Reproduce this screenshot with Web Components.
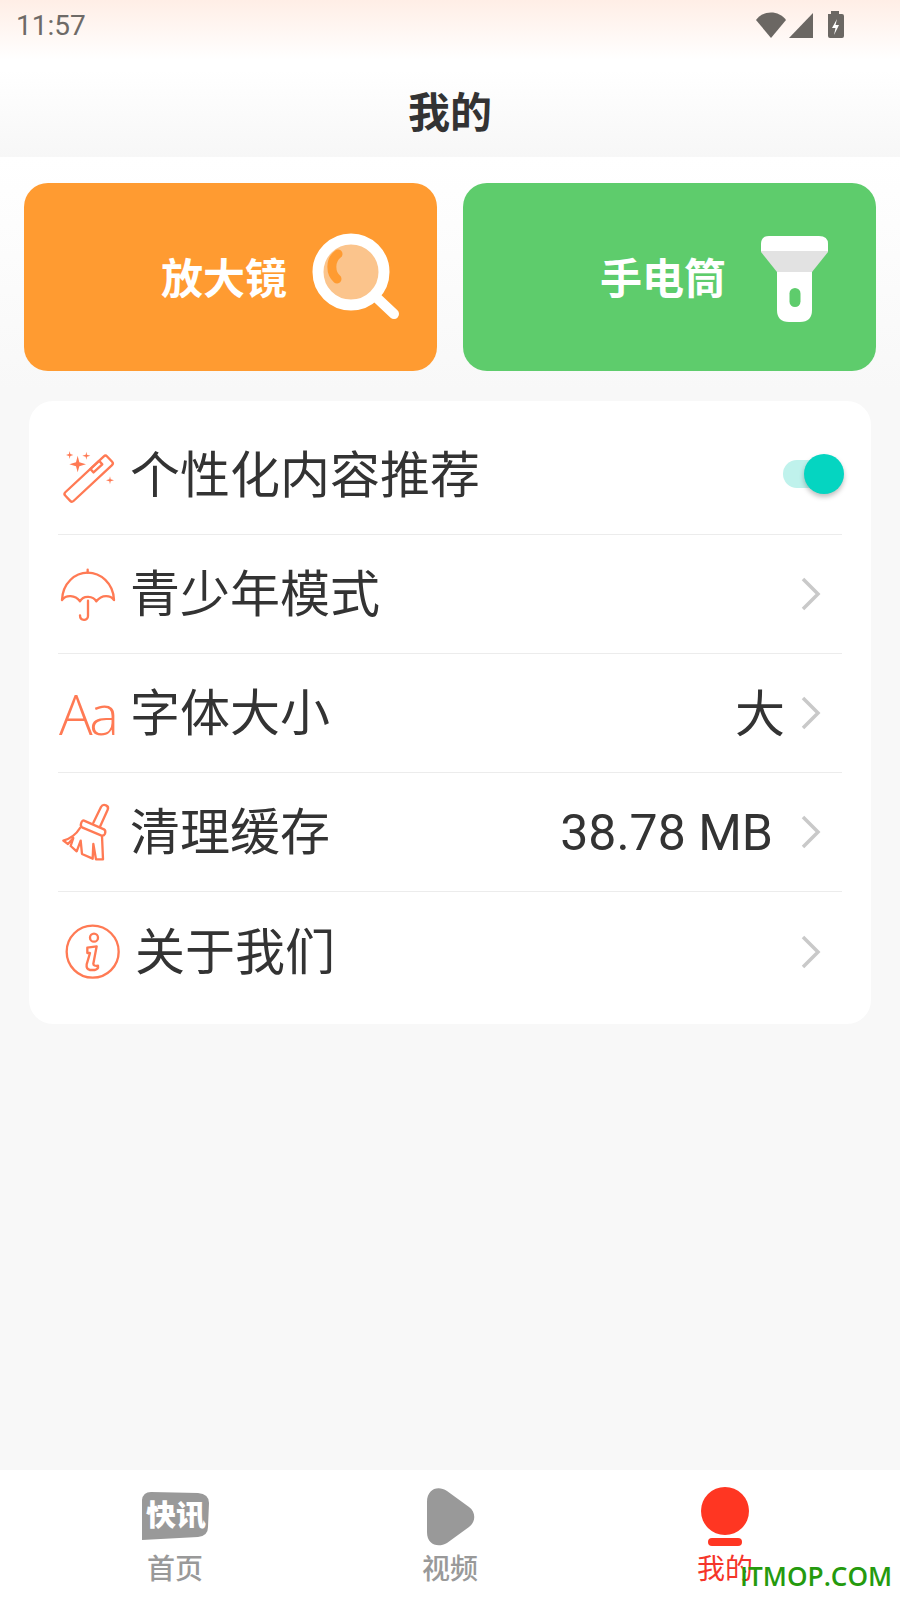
<!DOCTYPE html>
<html lang="zh">
<head>
<meta charset="utf-8">
<title>我的</title>
<style>
    html, body { margin: 0; padding: 0; }
    body {
        width: 900px;
        height: 1600px;
        overflow: hidden;
        position: relative;
        display: flex;
        flex-direction: column;
        background: #f8f8f8;
        font-family: "Noto Sans CJK SC", "Noto Sans", sans-serif;
        color: #333;
    }
    setting-row svg { display: block; overflow: visible; }
</style>
</head>
<body>
<app-header title-text="我的" time="11:57"></app-header>

<main-area>
    <tool-card label="放大镜" color="#ff9b31" style="--pad: 38px; --gap: 24px; --icon-shift: 1px">
        <svg slot="icon" width="88" height="90" viewBox="0 0 88 90">
            <circle cx="40" cy="39" r="33" fill="#fbc48c" stroke="#fff" stroke-width="11"/>
            <path d="M66 65 L83 81" stroke="#fff" stroke-width="10" stroke-linecap="round"/>
            <path d="M27 21 C19 27 19 40 26 46" fill="none" stroke="#ff9b31" stroke-width="9" stroke-linecap="round"/>
        </svg>
    </tool-card>
    <tool-card label="手电筒" color="#5ecc6c" style="--pad: 48px; --gap: 34px; --icon-shift: 1px">
        <svg slot="icon" width="68" height="87" viewBox="0 0 68 87">
            <path d="M1 15 L68 15 L68 17 L52 37 L17 37 L1 17 Z" fill="#e2e2e2"/>
            <path d="M1 9 Q1 1 9 1 L59 1 Q68 1 68 9 L68 16 L1 16 Z" fill="#fff"/>
            <path d="M17 37 L52 37 L52 75 Q52 87 40 87 L29 87 Q17 87 17 75 Z" fill="#fff"/>
            <rect x="29.500" y="53" width="11" height="19" rx="5.500" fill="#5ecc6c"/>
        </svg>
    </tool-card>

    <settings-list>
        <setting-row no-arrow>
            <svg slot="icon" width="60" height="60" viewBox="54 42 180 180" fill="none" stroke="#ff7a54" stroke-width="7" stroke-linejoin="round">
                <rect x="60" y="125" width="172" height="36" rx="7" transform="rotate(-43 146 143)"/>
                <rect x="151" y="100" width="36" height="14" transform="rotate(-43 169 107)"/>
                <g fill="#ff7a54" stroke="none">
                    <path d="M113 74 L118 94 L138 100 L118 106 L113 124 L108 106 L88 100 L108 94 Z"/>
                    <path d="M89 60 L91 69 L100 72 L91 75 L89 84 L87 75 L78 72 L87 69 Z"/>
                    <path d="M139 62 L141 71 L151 74 L141 77 L139 86 L137 77 L127 74 L137 71 Z"/>
                    <path d="M210 136 L212 145 L222 148 L212 151 L210 160 L208 151 L198 148 L208 145 Z"/>
                </g>
            </svg>
            个性化内容推荐
            <toggle-switch slot="value"></toggle-switch>
        </setting-row>
        <setting-row>
            <svg slot="icon" width="60" height="60" viewBox="54 398 180 180" fill="none" stroke="#ff7a54" stroke-width="7" stroke-linecap="round" stroke-linejoin="round">
                <path d="M143 415 L143 424"/>
                <path d="M66 506 C68 455 105 424 143 424 C181 424 220 455 222 506 C212 492 186 488 169 510 C160 494 130 490 120 510 C105 490 78 490 66 506 Z"/>
                <path d="M144 508 L144 554 C144 570 120 570 120 552"/>
            </svg>
            青少年模式
        </setting-row>
        <setting-row>
            <span slot="icon" style="display:block;width:60px;margin-left:1px;font:300 56px/60px 'Open Sans',sans-serif;color:#ff7a54;letter-spacing:-3.500px;white-space:nowrap">Aa</span>
            字体大小
            <row-value slot="value" style="--right: 16px; --top: 2px">大</row-value>
        </setting-row>
        <setting-row>
            <svg slot="icon" width="60" height="60" viewBox="54 396 180 180" fill="none" stroke="#ff7a54" stroke-width="7" stroke-linecap="round" stroke-linejoin="round">
                <path d="M160 458 L183 411 Q188 402 198 406 Q207 410 203 419 L180 470"/>
                <path d="M132 452 L192 478 Q198 482 195 491 Q191 499 183 496 L126 472 Q120 468 124 458 Q127 450 132 452 Z"/>
                <path d="M120 474 C108 494 90 506 70 512 L84 522 L100 504 L92 528 L110 544 L122 512 L126 552 L158 566 L160 522 L168 568 L189 568 L186 498"/>
            </svg>
            清理缓存
            <row-value slot="value" style="--right: 28px; --top: 1px">38.78 MB</row-value>
        </setting-row>
        <setting-row style="--icon-gap: 17px">
            <svg slot="icon" width="60" height="60" viewBox="54 753 180 180" fill="none" stroke="#ff7a54" stroke-width="7" stroke-linecap="round" stroke-linejoin="round">
                <circle cx="158" cy="842" r="78"/>
                <circle cx="162" cy="800" r="12"/>
                <path d="M142 830 L170 826 L160 878 Q160 886 174 884 Q176 894 164 897 L150 897 Q138 894 140 880 L150 846 L142 846 Z"/>
            </svg>
            关于我们
        </setting-row>
    </settings-list>
</main-area>

<tab-bar>
    <tab-item label="首页">
        <svg slot="icon" width="80" height="62" viewBox="0 0 80 62">
            <path d="M7 12 Q8 4 16 4 L63 5 Q74 6 74 15 L73 39 Q73 48 63 49 L7 52 Z" fill="#999"/>
            <text x="11" y="38" font-family="Noto Sans CJK SC, sans-serif" font-size="29" font-weight="900" fill="#fff" textLength="60" lengthAdjust="spacingAndGlyphs">快讯</text>
        </svg>
    </tab-item>
    <tab-item label="视频">
        <svg slot="icon" width="80" height="62" viewBox="0 0 80 62">
            <path d="M17 14 C17 1 28 -3 37 3 L59 19 C66 24 66 34 59 39 L37 55 C28 60 17 57 17 44 Z" fill="#999"/>
        </svg>
    </tab-item>
    <tab-item label="我的" active>
        <svg slot="icon" width="80" height="62" viewBox="0 0 80 62">
            <circle cx="40" cy="23" r="24" fill="#ff3622"/>
            <rect x="23" y="50" width="34" height="8" rx="4" fill="#ff3622"/>
        </svg>
    </tab-item>
</tab-bar>

<water-mark>ITMOP.COM</water-mark>

<script>
class AppHeader extends HTMLElement {
    constructor() {
        super();
        this.attachShadow({ mode: 'open' });
        this.shadowRoot.innerHTML = `
            <style>
                :host {
                    display: block;
                    height: 157px;
                    flex: none;
                    background: linear-gradient(#ffeee6 0, #fff 60px, #fff 70px, #f7f7f7 157px);
                }
                .status {
                    height: 50px;
                    display: flex;
                    align-items: center;
                    justify-content: space-between;
                    padding: 0 56px 0 16px;
                    color: #6e6a67;
                    font: 28px/50px Roboto, sans-serif;
                }
                .status svg { display: block; }
                .time { position: relative; top: 1px; }
                .title {
                    text-align: center;
                    font: 700 42px/60px "Noto Sans CJK SC", sans-serif;
                    color: #333;
                    margin-top: 30px;
                }
            </style>
            <div class="status">
                <span class="time"></span>
                <svg width="88" height="28" viewBox="0 0 88 28" fill="#6b6763">
                    <path d="M0 9 C7 -1 23 -1 30 9 L15 27 Z"/>
                    <path d="M33 27 L57 2 L57 27 Z"/>
                    <path d="M72 3 L75 3 L75 0 L83 0 L83 3 L86 3 Q88 3 88 5 L88 25 Q88 27 86 27 L74 27 Q72 27 72 25 Z"/>
                    <path d="M81 8 L76 17 L79.500 17 L78 24 L83 14 L79.500 14 Z" fill="#fff"/>
                </svg>
            </div>
            <div class="title"></div>
        `;
    }

    connectedCallback() {
        this.shadowRoot.querySelector('.time').textContent = this.getAttribute('time');
        this.shadowRoot.querySelector('.title').textContent = this.getAttribute('title-text');
    }
}

class MainArea extends HTMLElement {
    constructor() {
        super();
        this.attachShadow({ mode: 'open' });
        this.shadowRoot.innerHTML = `
            <style>
                :host {
                    display: grid;
                    grid-template-columns: 413px 413px;
                    grid-auto-rows: min-content;
                    column-gap: 26px;
                    row-gap: 30px;
                    flex: 1;
                    padding: 26px 24px 0;
                    background: linear-gradient(#fff, #f8f8f8 233px);
                }
            </style>
            <slot></slot>
        `;
    }
}

class ToolCard extends HTMLElement {
    constructor() {
        super();
        this.attachShadow({ mode: 'open' });
        this.shadowRoot.innerHTML = `
            <style>
                :host {
                    display: flex;
                    align-items: center;
                    justify-content: flex-end;
                    height: 188px;
                    border-radius: 24px;
                    padding-right: var(--pad);
                    gap: var(--gap);
                }
                .label {
                    color: #fff;
                    font: 700 42px/60px "Noto Sans CJK SC", sans-serif;
                    position: relative;
                    top: -1px;
                }
                ::slotted(svg) {
                    display: block;
                    margin-top: calc(var(--icon-shift) * 2);
                }
            </style>
            <span class="label"></span>
            <slot name="icon"></slot>
        `;
    }

    connectedCallback() {
        this.style.background = this.getAttribute('color');
        this.shadowRoot.querySelector('.label').textContent = this.getAttribute('label');
    }
}

class SettingsList extends HTMLElement {
    constructor() {
        super();
        this.attachShadow({ mode: 'open' });
        this.shadowRoot.innerHTML = `
            <style>
                :host {
                    display: block;
                    grid-column: 1 / 3;
                    margin: 0 5px;
                    padding: 15px 29px 13px;
                    background: #fff;
                    border-radius: 24px;
                }
            </style>
            <slot></slot>
        `;
    }
}

class SettingRow extends HTMLElement {
    constructor() {
        super();
        this.attachShadow({ mode: 'open' });
        this.shadowRoot.innerHTML = `
            <style>
                :host {
                    display: flex;
                    align-items: center;
                    box-sizing: border-box;
                    height: 119px;
                    border-bottom: 1px solid #ececec;
                    font: 400 50px/60px "Noto Sans CJK SC", sans-serif;
                    color: #333;
                }
                :host(:last-child) { border-bottom: 0; }
                .icon { flex: none; width: 60px; margin-right: var(--icon-gap, 12px); }
                .label { flex: 1; white-space: nowrap; position: relative; top: -4px; }
                .arrow { flex: none; display: block; margin: 0 21px 0 0; }
                :host([no-arrow]) .arrow { display: none; }
            </style>
            <div class="icon"><slot name="icon"></slot></div>
            <div class="label"><slot></slot></div>
            <slot name="value"></slot>
            <svg class="arrow" width="20" height="34" viewBox="0 0 20 34" fill="none" stroke="#c9c9c9" stroke-width="3.500">
                <path d="M2 2 L17 17 L2 32"/>
            </svg>
        `;
    }
}

class RowValue extends HTMLElement {
    constructor() {
        super();
        this.attachShadow({ mode: 'open' });
        this.shadowRoot.innerHTML = `
            <style>
                :host {
                    display: block;
                    position: relative;
                    top: var(--top);
                    margin-right: var(--right);
                    font-family: Roboto, "Noto Sans CJK SC", sans-serif;
                    white-space: nowrap;
                }
            </style>
            <slot></slot>
        `;
    }
}

class ToggleSwitch extends HTMLElement {
    constructor() {
        super();
        this.attachShadow({ mode: 'open' });
        this.shadowRoot.innerHTML = `
            <style>
                :host {
                    display: block;
                    position: relative;
                    width: 61px;
                    height: 40px;
                    margin: -2px -2px 0 0;
                }
                .track {
                    position: absolute;
                    left: 0;
                    top: 6px;
                    width: 52px;
                    height: 28px;
                    border-radius: 14px;
                    background: #bff2ec;
                }
                .thumb {
                    position: absolute;
                    right: 0;
                    top: 0;
                    width: 40px;
                    height: 40px;
                    border-radius: 50%;
                    background: #05d5c1;
                    box-shadow: 0 3px 5px rgba(0, 0, 0, .25);
                }
            </style>
            <div class="track"></div>
            <div class="thumb"></div>
        `;
    }
}

class TabBar extends HTMLElement {
    constructor() {
        super();
        this.attachShadow({ mode: 'open' });
        this.shadowRoot.innerHTML = `
            <style>
                :host {
                    display: grid;
                    grid-template-columns: repeat(3, 275px);
                    flex: none;
                    height: 130px;
                    box-sizing: border-box;
                    padding: 18px 37.500px 0;
                    background: #fff;
                }
            </style>
            <slot></slot>
        `;
    }
}

class TabItem extends HTMLElement {
    constructor() {
        super();
        this.attachShadow({ mode: 'open' });
        this.shadowRoot.innerHTML = `
            <style>
                :host {
                    display: flex;
                    flex-direction: column;
                    align-items: center;
                    color: #999;
                    font: 500 28px/32px "Noto Sans CJK SC", sans-serif;
                }
                :host([active]) { color: #f5352a; font-weight: 400; }
                ::slotted(svg) { display: block; overflow: visible; }
                .label { margin-top: 1px; }
            </style>
            <slot name="icon"></slot>
            <div class="label"></div>
        `;
    }

    connectedCallback() {
        this.shadowRoot.querySelector('.label').textContent = this.getAttribute('label');
    }
}

class WaterMark extends HTMLElement {
    constructor() {
        super();
        this.attachShadow({ mode: 'open' });
        this.shadowRoot.innerHTML = `
            <style>
                :host {
                    position: absolute;
                    left: 740px;
                    top: 1558px;
                    color: #259a0e;
                    font: 600 26.200px/36px "Open Sans", sans-serif;
                    white-space: nowrap;
                }
            </style>
            <slot></slot>
        `;
    }
}

customElements.define('app-header', AppHeader);
customElements.define('main-area', MainArea);
customElements.define('tool-card', ToolCard);
customElements.define('settings-list', SettingsList);
customElements.define('setting-row', SettingRow);
customElements.define('row-value', RowValue);
customElements.define('toggle-switch', ToggleSwitch);
customElements.define('tab-bar', TabBar);
customElements.define('tab-item', TabItem);
customElements.define('water-mark', WaterMark);
</script>
</body>
</html>
